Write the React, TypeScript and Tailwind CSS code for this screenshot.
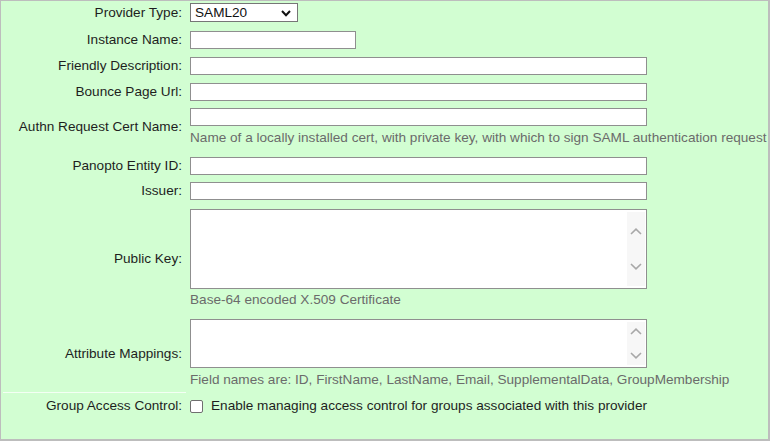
import React from "react";

function Chevron({ dir }: { dir: "up" | "down" }) {
  return (
    <svg width="12" height="7" viewBox="0 0 12 7" className="block">
      <path
        d={dir === "up" ? "M1 6 L6 1.2 L11 6" : "M1 1 L6 5.8 L11 1"}
        fill="none"
        stroke="#a8a8a8"
        strokeWidth="1.6"
      />
    </svg>
  );
}

function TextArea({ h, pad }: { h: string; pad: string }) {
  return (
    <div className={`flex w-[457px] ${h} border border-[#8f8f8f] bg-white`}>
      <textarea className="flex-1 resize-none outline-none bg-white" />
      <div className={`w-[18px] bg-[#f7f7f7] flex flex-col items-center justify-between ${pad} my-[2px] mr-[1px]`}>
        <Chevron dir="up" />
        <Chevron dir="down" />
      </div>
    </div>
  );
}

function Input({ w }: { w: string }) {
  return <input type="text" className={`block ${w} h-[18px] border border-[#8f8f8f] bg-white outline-none`} />;
}

function Row({ label, children, cls }: { label: string; children: React.ReactNode; cls: string }) {
  return (
    <div className={`flex items-center ${cls}`}>
      <div className="w-[181px] shrink-0 text-right leading-[16px] text-[#1e1e1e] whitespace-nowrap">{label}</div>
      <div className="ml-[8px]">{children}</div>
    </div>
  );
}

export default function App() {
  return (
    <div className="w-[770px] h-[441px] bg-[#d2fed2] border-t border-l border-r-2 border-b-2 border-[#bdbdbd] font-['Liberation_Sans',Arial,sans-serif] text-[13.6px] text-[#1e1e1e] overflow-hidden">
      <div className="pt-[2px]">
        <Row label="Provider Type:" cls="mb-[9px]">
          <div className="relative w-[108px] h-[19px] border border-[#767676] bg-white flex items-center pl-[4px] leading-[16px] text-[#111]">
            SAML20
            <svg width="10" height="7" viewBox="0 0 10 7" className="absolute right-[6px] top-[6px]">
              <path d="M1 1 L5 5.3 L9 1" fill="none" stroke="#111" strokeWidth="2" />
            </svg>
          </div>
        </Row>
        <Row label="Instance Name:" cls="mb-[8px]">
          <Input w="w-[166px]" />
        </Row>
        <Row label="Friendly Description:" cls="mb-[8px]">
          <Input w="w-[457px]" />
        </Row>
        <Row label="Bounce Page Url:" cls="mb-[7px]">
          <Input w="w-[457px]" />
        </Row>
        <Row label="Authn Request Cert Name:" cls="mb-[11px]">
          <Input w="w-[457px]" />
          <div className="mt-[4px] leading-[16px] text-[#6b6b6b] whitespace-nowrap">
            Name of a locally installed cert, with private key, with which to sign SAML authentication request
          </div>
        </Row>
        <Row label="Panopto Entity ID:" cls="mb-[7px]">
          <Input w="w-[457px]" />
        </Row>
        <Row label="Issuer:" cls="mb-[9px]">
          <Input w="w-[457px]" />
        </Row>
        <Row label="Public Key:" cls="mb-[11px]">
          <TextArea h="h-[80px]" pad="py-[16px]" />
          <div className="mt-[3px] leading-[16px] text-[#6b6b6b] whitespace-nowrap">Base-64 encoded X.509 Certificate</div>
        </Row>
        <Row label="Attribute Mappings:" cls="">
          <TextArea h="h-[49px]" pad="py-[6px]" />
          <div className="mt-[4px] leading-[16px] text-[#6b6b6b] whitespace-nowrap">
            Field names are: ID, FirstName, LastName, Email, SupplementalData, GroupMembership
          </div>
        </Row>
        <div className="mt-[4px] ml-[2px] w-[183px] h-px bg-[#f4fff4]" />
        <div className="flex items-center h-[26px]">
          <div className="w-[181px] shrink-0 text-right leading-[16px] whitespace-nowrap">Group Access Control:</div>
          <div className="ml-[8px] flex items-center">
            <div className="w-[13px] h-[13px] border border-[#6f6f6f] bg-white rounded-[2px]" />
            <span className="ml-[8px] leading-[16px] whitespace-nowrap">Enable managing access control for groups associated with this provider</span>
          </div>
        </div>
      </div>
    </div>
  );
}
